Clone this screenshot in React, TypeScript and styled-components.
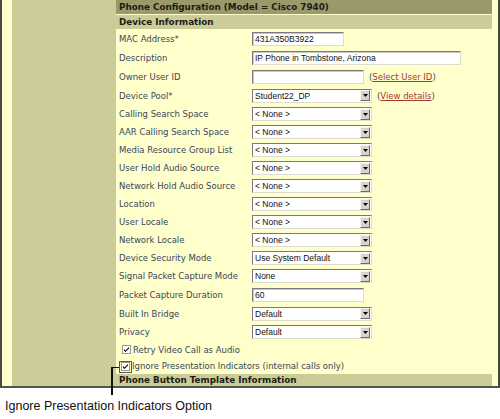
import React from 'react';
import styled, { createGlobalStyle } from 'styled-components';

const GlobalStyle = createGlobalStyle`
  html, body { margin: 0; padding: 0; background: #ffffff; }
`;

const Page = styled.div`
  position: relative;
  width: 500px;
  height: 419px;
  overflow: hidden;
`;

const Frame = styled.div`
  display: flex;
  height: 386px;
  background: #ffffcc;
  border-left: 2px solid #4a4a44;
  border-right: 2px solid #4a4a44;
  border-bottom: 2px solid #55554a;
`;

const Gutter = styled.div`
  width: 10px;
  flex: none;
`;

const Sidebar = styled.div`
  width: 104px;
  flex: none;
  background: #cccc99;
`;

const Main = styled.div`
  flex: 1;
  display: flex;
  flex-direction: column;
  padding-right: 6px;
  min-width: 0;
  font-family: "DejaVu Sans", Verdana, sans-serif;
  font-size: 8.5px;
  color: #38465a;
`;

const Bar = styled.div<{ $dark?: boolean; $h: number }>`
  flex: none;
  height: ${p => p.$h}px;
  line-height: ${p => p.$h}px;
  padding-left: 3px;
  background: ${p => (p.$dark ? '#99996b' : '#cccc99')};
  color: #1c1c14;
  font-size: 8.8px;
  font-weight: bold;
  white-space: nowrap;
  overflow: hidden;
  margin-bottom: ${p => (p.$dark ? '1px' : '0')};
`;

const Row = styled.div<{ $h: number }>`
  display: grid;
  grid-template-columns: 136px 1fr;
  align-items: center;
  height: ${p => p.$h}px;
`;

const Label = styled.span`
  padding-left: 3px;
  white-space: nowrap;
`;

const Field = styled.div`
  display: flex;
  align-items: center;
  gap: 5px;
`;

const TextBox = styled.div<{ $w: number }>`
  box-sizing: border-box;
  width: ${p => p.$w}px;
  height: 14px;
  background: #ffffff;
  border-top: 1px solid #7a7a7a;
  border-left: 1px solid #7a7a7a;
  border-right: 1px solid #dcdcd0;
  border-bottom: 1px solid #dcdcd0;
  box-shadow: inset 1px 1px 0 #c8c8c0;
  font-family: "Liberation Sans", Arial, sans-serif;
  font-size: 8.5px;
  line-height: 12px;
  padding-left: 2px;
  color: #111;
  white-space: nowrap;
  overflow: hidden;
`;

const SelectBox = styled.div`
  box-sizing: border-box;
  width: 120px;
  height: 14px;
  display: flex;
  background: #ffffff;
  border-top: 1px solid #7a7a7a;
  border-left: 1px solid #7a7a7a;
  border-right: 1px solid #dcdcd0;
  border-bottom: 1px solid #dcdcd0;
  font-family: "Liberation Sans", Arial, sans-serif;
  font-size: 8.5px;
  line-height: 12px;
  color: #111;
`;

const SelectValue = styled.span`
  flex: 1;
  padding-left: 2px;
  white-space: nowrap;
  overflow: hidden;
`;

const ArrowButton = styled.span`
  box-sizing: border-box;
  width: 10px;
  height: 11px;
  margin: 0 1px 0 0;
  align-self: center;
  display: flex;
  align-items: center;
  justify-content: center;
  background: #d8d4cc;
  border-top: 1px solid #f4f4f0;
  border-left: 1px solid #f4f4f0;
  border-right: 1px solid #6a6a6a;
  border-bottom: 1px solid #6a6a6a;
`;

const Paren = styled.span`
  color: #38465a;
  white-space: nowrap;
`;

const Link = styled.a`
  color: #a23a34;
  text-decoration: underline;
`;

const CheckRow = styled.div<{ $h: number; $indent: number }>`
  display: flex;
  align-items: center;
  gap: 2px;
  height: ${p => p.$h}px;
  padding-left: ${p => p.$indent}px;
  white-space: nowrap;
`;

const CheckMark = styled.span`
  display: inline-flex;
  width: 9px;
  height: 9px;
  box-sizing: border-box;
  background: #ffffff;
  border: 1px solid #9a9a90;
`;

const CalloutBox = styled.div`
  position: absolute;
  left: 119px;
  top: 361px;
  width: 13px;
  height: 12px;
  box-sizing: border-box;
  border: 1px solid #5a5a50;
`;

const CalloutLineH = styled.div`
  position: absolute;
  left: 112px;
  top: 367px;
  width: 7px;
  height: 1px;
  background: #111;
`;

const CalloutLineV = styled.div`
  position: absolute;
  left: 111px;
  top: 367px;
  width: 2px;
  height: 28px;
  background: #111;
`;

const Caption = styled.div`
  padding: 11px 0 0 5px;
  font-family: "Liberation Sans", Arial, sans-serif;
  font-size: 12.5px;
  color: #111;
  white-space: nowrap;
`;

function Select({ value }: { value: string }) {
  return (
    <SelectBox>
      <SelectValue>{value}</SelectValue>
      <ArrowButton>
        <svg width="5" height="3" viewBox="0 0 5 3">
          <path d="M0 0h5L2.5 3z" fill="#000" />
        </svg>
      </ArrowButton>
    </SelectBox>
  );
}

function Check() {
  return (
    <CheckMark>
      <svg width="7" height="7" viewBox="0 0 7 7">
        <path d="M1 3l1.5 1.6L6 1v1.6L2.5 6 1 4.4z" fill="#000" />
      </svg>
    </CheckMark>
  );
}

const selectRows: [string, string][] = [
  ['Calling Search Space', '< None >'],
  ['AAR Calling Search Space', '< None >'],
  ['Media Resource Group List', '< None >'],
  ['User Hold Audio Source', '< None >'],
  ['Network Hold Audio Source', '< None >'],
  ['Location', '< None >'],
  ['User Locale', '< None >'],
  ['Network Locale', '< None >'],
  ['Device Security Mode', 'Use System Default'],
  ['Signal Packet Capture Mode', 'None'],
];

export default function App() {
  return (
    <Page>
      <GlobalStyle />
      <Frame>
        <Gutter />
        <Sidebar />
        <Main>
          <Bar $dark $h={14}>Phone Configuration (Model = Cisco 7940)</Bar>
          <Bar $h={14}>Device Information</Bar>

          <Row $h={19}>
            <Label>MAC Address*</Label>
            <Field><TextBox $w={92}>431A350B3922</TextBox></Field>
          </Row>
          <Row $h={19}>
            <Label>Description</Label>
            <Field><TextBox $w={209}>IP Phone in Tombstone, Arizona</TextBox></Field>
          </Row>
          <Row $h={19}>
            <Label>Owner User ID</Label>
            <Field>
              <TextBox $w={112} />
              <Paren>(<Link>Select User ID</Link>)</Paren>
            </Field>
          </Row>
          <Row $h={19}>
            <Label>Device Pool*</Label>
            <Field>
              <Select value="Student22_DP" />
              <Paren>(<Link>View details</Link>)</Paren>
            </Field>
          </Row>

          {selectRows.map(([label, value]) => (
            <Row $h={18} key={label}>
              <Label>{label}</Label>
              <Field><Select value={value} /></Field>
            </Row>
          ))}

          <Row $h={19}>
            <Label>Packet Capture Duration</Label>
            <Field><TextBox $w={112}>60</TextBox></Field>
          </Row>
          <Row $h={19}>
            <Label>Built In Bridge</Label>
            <Field><Select value="Default" /></Field>
          </Row>
          <Row $h={18}>
            <Label>Privacy</Label>
            <Field><Select value="Default" /></Field>
          </Row>

          <CheckRow $h={17} $indent={6}>
            <Check />
            <span>Retry Video Call as Audio</span>
          </CheckRow>
          <CheckRow $h={16} $indent={5}>
            <Check />
            <span>Ignore Presentation Indicators (internal calls only)</span>
          </CheckRow>

          <Bar $h={12}>Phone Button Template Information</Bar>
        </Main>
      </Frame>

      <CalloutBox />
      <CalloutLineH />
      <CalloutLineV />
      <Caption>Ignore Presentation Indicators Option</Caption>
    </Page>
  );
}
